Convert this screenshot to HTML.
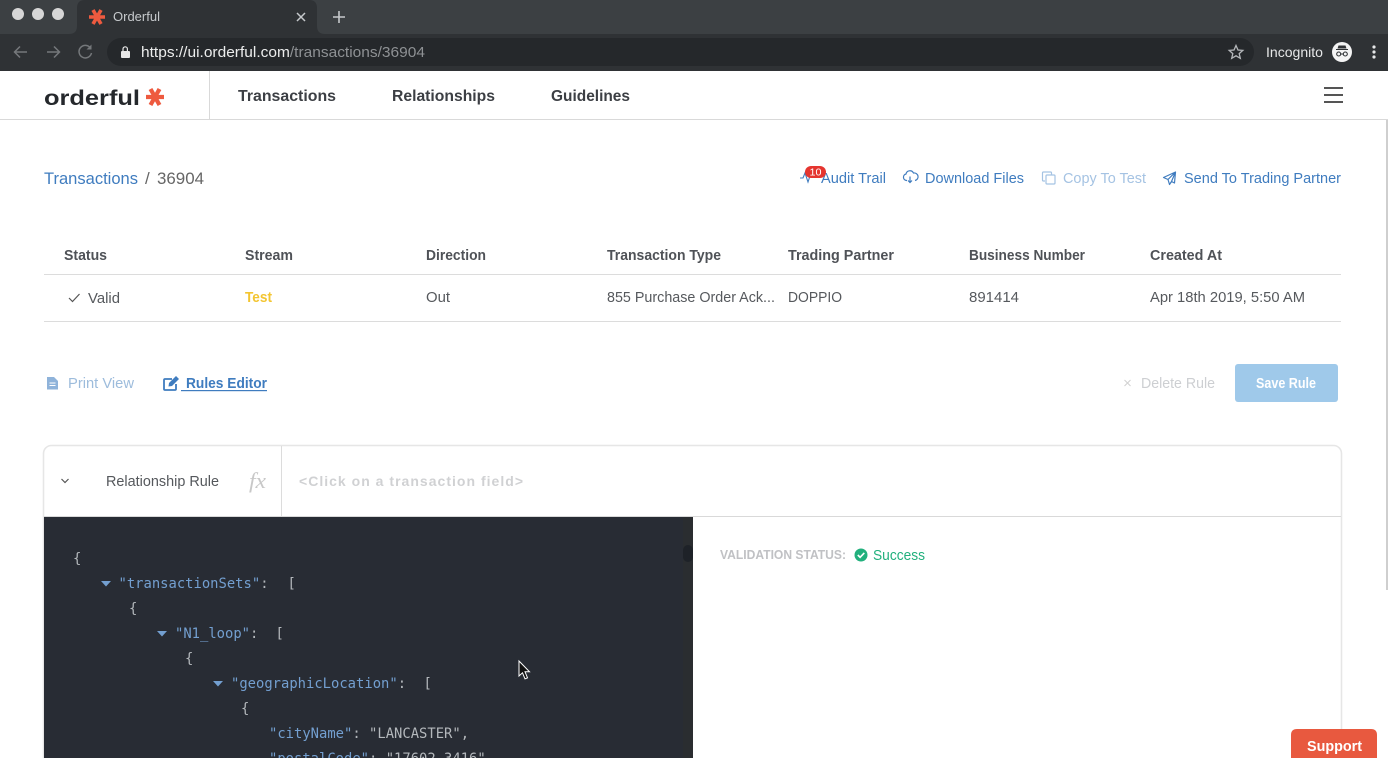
<!DOCTYPE html>
<html><head><meta charset="utf-8"><title>Orderful</title>
<style>
html,body{margin:0;padding:0;background:#fff;width:1388px;height:758px;overflow:hidden}
svg{display:block;position:absolute;left:0;top:0}
text{font-family:"Liberation Sans",sans-serif;white-space:pre}
.m{font-family:"DejaVu Sans Mono",monospace;font-size:13.85px}
.k{fill:#739fd0}.p{fill:#b4b8bc}
</style></head><body>
<svg width="1388" height="758" viewBox="0 0 1388 758" xmlns="http://www.w3.org/2000/svg">
<!-- chrome -->
<rect width="1388" height="34" fill="#3c4043"/>
<rect y="34" width="1388" height="37" fill="#2f3235"/>
<path d="M69 34q8 0 8-8V8q0-8 8-8h224q8 0 8 8v18q0 8 8 8z" fill="#2f3235"/>
<circle cx="18" cy="14" r="6" fill="#d6d6d6"/><circle cx="38" cy="14" r="6" fill="#d6d6d6"/><circle cx="58" cy="14" r="6" fill="#d6d6d6"/>
<g stroke="#ee5a3f" stroke-width="3.6" stroke-linecap="butt"><path d="M89 17h16M93 10l8 14M101 10l-8 14"/></g>
<text x="113" y="21" font-size="13" fill="#c6c9cc" textLength="47" lengthAdjust="spacingAndGlyphs">Orderful</text>
<path d="M297 13l8 8M305 13l-8 8" stroke="#c6c9cc" stroke-width="1.5"/>
<path d="M339 11v12M333 17h12" stroke="#c6c9cc" stroke-width="1.6"/>
<path d="M27 52H15M20 46.500L14.500 52l5.500 5.500" fill="none" stroke="#75787b" stroke-width="1.5"/>
<path d="M47 52h12M54 46.500L59.500 52 54 57.500" fill="none" stroke="#75787b" stroke-width="1.5"/>
<path d="M90.500 48a6.300 6.300 0 1 0 1 5" fill="none" stroke="#75787b" stroke-width="1.5"/><path d="M91.500 44.500v5h-5z" fill="#75787b"/>
<rect x="107" y="38" width="1147" height="28" rx="14" fill="#25282b"/>
<rect x="121" y="51" width="9" height="7" rx="1" fill="#e8e8e8"/><path d="M123 51v-2a2.200 2.200 0 0 1 4.400 0v2" fill="none" stroke="#e8e8e8" stroke-width="1.200"/>
<text x="141" y="57" font-size="15" textLength="284" lengthAdjust="spacingAndGlyphs" fill="#8e9194"><tspan fill="#eceded">https://ui.orderful.com</tspan>/transactions/36904</text>
<path d="M1236 45.500l2 4.500 4.800.4-3.600 3.200 1.100 4.700-4.300-2.500-4.300 2.500 1.100-4.700-3.600-3.200 4.800-.4z" fill="none" stroke="#b5b8bb" stroke-width="1.300"/>
<text x="1266" y="57" font-size="14" fill="#e6e7e8" textLength="57" lengthAdjust="spacingAndGlyphs">Incognito</text>
<circle cx="1342" cy="52" r="10" fill="#f4f4f4"/>
<path d="M1336 49h12v1h-12zM1338.500 45.500h7l1 3h-9z" fill="#2f3235"/>
<circle cx="1338.700" cy="54" r="2" fill="none" stroke="#2f3235" stroke-width="1.100"/><circle cx="1345.300" cy="54" r="2" fill="none" stroke="#2f3235" stroke-width="1.100"/><path d="M1340.500 54h3" stroke="#2f3235"/>
<circle cx="1374" cy="47" r="1.600" fill="#e6e7e8"/><circle cx="1374" cy="52" r="1.600" fill="#e6e7e8"/><circle cx="1374" cy="57" r="1.600" fill="#e6e7e8"/>
<!-- nav -->
<rect y="119" width="1388" height="1" fill="#d9d9d9"/><rect x="209" y="71" width="1" height="48" fill="#d9d9d9"/>
<text x="44" y="105" font-size="21" font-weight="700" fill="#25282c" textLength="96" lengthAdjust="spacingAndGlyphs">orderful</text>
<g stroke="#ee5a3f" stroke-width="4.200"><path d="M146 97h18M150.500 89l9 16M159.500 89l-9 16"/></g>
<g font-size="16" font-weight="700" fill="#3c3f44"><text x="238" y="101" textLength="98" lengthAdjust="spacingAndGlyphs">Transactions</text><text x="392" y="101" textLength="103" lengthAdjust="spacingAndGlyphs">Relationships</text><text x="551" y="101" textLength="79" lengthAdjust="spacingAndGlyphs">Guidelines</text></g>
<path d="M1324 88h19M1324 95h19M1324 102h19" stroke="#555" stroke-width="2"/>
<rect x="1386" y="120" width="2" height="470" fill="#cfcfcf"/>
<!-- breadcrumb -->
<text x="44" y="184" font-size="17" fill="#3f7cbf" textLength="94" lengthAdjust="spacingAndGlyphs">Transactions</text>
<text x="145" y="184" font-size="17" fill="#666">/</text>
<text x="157" y="184" font-size="17" fill="#666" textLength="47" lengthAdjust="spacingAndGlyphs">36904</text>
<!-- actions -->
<g font-size="14.500">
<text x="821" y="183" fill="#3f7cbf" textLength="65" lengthAdjust="spacingAndGlyphs">Audit Trail</text>
<text x="925" y="183" fill="#3f7cbf" textLength="99" lengthAdjust="spacingAndGlyphs">Download Files</text>
<text x="1063" y="183" fill="#a5c3e3" textLength="83" lengthAdjust="spacingAndGlyphs">Copy To Test</text>
<text x="1184" y="183" fill="#3f7cbf" textLength="157" lengthAdjust="spacingAndGlyphs">Send To Trading Partner</text>
</g>
<path d="M800 178h3l2-5 3 9 2-6h3" fill="none" stroke="#3f7cbf" stroke-width="1.100"/>
<rect x="805" y="166" width="21" height="12" rx="6" fill="#e5352f"/>
<text x="809.500" y="175.500" font-size="10.500" fill="#fff" textLength="12" lengthAdjust="spacingAndGlyphs">10</text>
<path d="M907 180.500h-.5a3.300 3.300 0 0 1-.5-6.500 4 4 0 0 1 7.500-1 3.300 3.300 0 0 1 1.500 7.500M910 176.500v6M908 180.500l2 2 2-2" fill="none" stroke="#3f7cbf" stroke-width="1.200"/>
<rect x="1046" y="175" width="9" height="9" rx="1" fill="none" stroke="#a5c3e3" stroke-width="1.200"/><path d="M1045 181h-1.500a1 1 0 0 1-1-1v-7a1 1 0 0 1 1-1h7a1 1 0 0 1 1 1v1.500" fill="none" stroke="#a5c3e3" stroke-width="1.200"/>
<path d="M1175.500 172l-12 5.500 4.500 2 1.500 5 2-3 3 1.500zM1168 179.500l7.500-7.500-4 9.500" fill="none" stroke="#3f7cbf" stroke-width="1.200" stroke-linejoin="round"/>
<!-- table -->
<g font-size="14.500" font-weight="700" fill="#4f5257">
<text x="64" y="260" textLength="43" lengthAdjust="spacingAndGlyphs">Status</text><text x="245" y="260" textLength="48" lengthAdjust="spacingAndGlyphs">Stream</text><text x="426" y="260" textLength="60" lengthAdjust="spacingAndGlyphs">Direction</text><text x="607" y="260" textLength="114" lengthAdjust="spacingAndGlyphs">Transaction Type</text><text x="788" y="260" textLength="106" lengthAdjust="spacingAndGlyphs">Trading Partner</text><text x="969" y="260" textLength="116" lengthAdjust="spacingAndGlyphs">Business Number</text><text x="1150" y="260" textLength="72" lengthAdjust="spacingAndGlyphs">Created At</text>
</g>
<rect x="44" y="274" width="1297" height="1" fill="#dcdcdc"/><rect x="44" y="321" width="1297" height="1" fill="#dcdcdc"/>
<path d="M69 298l3.500 3.500 7-7.500" fill="none" stroke="#555" stroke-width="1.200"/>
<g font-size="14.500" fill="#56595d">
<text x="88" y="303" textLength="32" lengthAdjust="spacingAndGlyphs">Valid</text><text x="426" y="302" textLength="24" lengthAdjust="spacingAndGlyphs">Out</text><text x="607" y="302" textLength="168" lengthAdjust="spacingAndGlyphs">855 Purchase Order Ack...</text><text x="788" y="302" textLength="54" lengthAdjust="spacingAndGlyphs">DOPPIO</text><text x="969" y="302" textLength="50" lengthAdjust="spacingAndGlyphs">891414</text><text x="1150" y="302" textLength="155" lengthAdjust="spacingAndGlyphs">Apr 18th 2019, 5:50 AM</text>
</g>
<text x="245" y="302" font-size="14.500" font-weight="700" fill="#f3c531" textLength="27" lengthAdjust="spacingAndGlyphs">Test</text>
<!-- toolbar -->
<path d="M47 377h7l4 4v8.500H47z" fill="#8fb3da"/><path d="M49.500 383h6M49.500 385.500h6" stroke="#fff"/>
<text x="68" y="388" font-size="14.500" fill="#9dbcdc" textLength="66" lengthAdjust="spacingAndGlyphs">Print View</text>
<path d="M172 379h-7a1 1 0 0 0-1 1v9a1 1 0 0 0 1 1h10a1 1 0 0 0 1-1v-5" fill="none" stroke="#3f7cbf" stroke-width="1.800"/>
<path d="M169 383l7-7 3 3-7 7-3.500.5z" fill="#3f7cbf"/>
<text x="186" y="388" font-size="14.500" font-weight="700" fill="#3f7cbf" textLength="81" lengthAdjust="spacingAndGlyphs">Rules Editor</text>
<rect x="181" y="390" width="86" height="1.200" fill="#3f7cbf"/>
<path d="M1124.500 380l6 6M1130.500 380l-6 6" stroke="#d0d0d0"/>
<text x="1141" y="388" font-size="14.500" fill="#cdcfd2" textLength="74" lengthAdjust="spacingAndGlyphs">Delete Rule</text>
<rect x="1235" y="364" width="103" height="38" rx="3" fill="#9fc9ea"/>
<text x="1256" y="388" font-size="14.500" font-weight="700" fill="#fff" textLength="60" lengthAdjust="spacingAndGlyphs">Save Rule</text>
<!-- card -->
<path d="M43.500 758V453.500a8 8 0 0 1 8-8h1282a8 8 0 0 1 8 8V758" fill="#fff" stroke="#e6e6e6" stroke-width="1.600"/>
<rect x="44" y="516" width="1297" height="1" fill="#d9d9d9"/><rect x="281" y="446" width="1" height="70" fill="#dcdcdc"/>
<path d="M61.500 479l3.500 3.500 3.500-3.500" fill="none" stroke="#555" stroke-width="1.200"/>
<text x="106" y="486" font-size="14.500" fill="#55585c" textLength="113" lengthAdjust="spacingAndGlyphs">Relationship Rule</text>
<text x="249" y="488" font-size="22" font-style="italic" fill="#c8c8c8" style="font-family:'Liberation Serif',serif" textLength="17" lengthAdjust="spacingAndGlyphs">fx</text>
<text x="299" y="486" font-size="14" font-weight="700" fill="#d0d1d3" textLength="224">&lt;Click on a transaction field&gt;</text>
<!-- code panel -->
<rect x="44" y="517" width="649" height="241" fill="#282c34"/>
<rect x="683" y="517" width="10" height="241" fill="#2a2d30"/>
<rect x="683" y="545" width="10" height="17" rx="5" fill="#1e2228"/>
<path d="M101 581h10l-5 5.500zM157 631h10l-5 5.500zM213 681h10l-5 5.500z" fill="#739fd0"/>
<text class="m p" x="73" y="563">{</text>
<text class="m k" x="118.500" y="588">"transactionSets"<tspan class="p">:</tspan></text><text class="m p" x="287.500" y="588">[</text>
<text class="m p" x="129" y="613">{</text>
<text class="m k" x="175" y="638">"N1_loop"<tspan class="p">:</tspan></text><text class="m p" x="275.500" y="638">[</text>
<text class="m p" x="185" y="663">{</text>
<text class="m k" x="231" y="688">"geographicLocation"<tspan class="p">:</tspan></text><text class="m p" x="423.500" y="688">[</text>
<text class="m p" x="241" y="713">{</text>
<text class="m k" x="269" y="738">"cityName"<tspan class="p">: "LANCASTER",</tspan></text>
<text class="m k" x="269" y="763">"postalCode"<tspan class="p">: "17602-3416"</tspan></text>
<!-- validation -->
<text x="720" y="559" font-size="12.500" font-weight="700" fill="#c0c1c4" textLength="126" lengthAdjust="spacingAndGlyphs">VALIDATION STATUS:</text>
<circle cx="861" cy="555" r="6.500" fill="#22b07d"/><path d="M857.800 555l2.300 2.300 4.200-4.400" fill="none" stroke="#fff" stroke-width="1.600"/>
<text x="873" y="560" font-size="14.500" fill="#22b07d" textLength="52" lengthAdjust="spacingAndGlyphs">Success</text>
<!-- cursor -->
<path d="M519 661v15l3.500-3.200 2.500 6 2.500-1-2.500-6h4.500z" fill="#111" stroke="#fff" stroke-width="1"/>
<!-- support -->
<path d="M1291 758v-23q0-6 6-6h74q6 0 6 6v23z" fill="#e8593f"/>
<text x="1307" y="751" font-size="14.500" font-weight="700" fill="#fff" textLength="55" lengthAdjust="spacingAndGlyphs">Support</text>
</svg>
</body></html>
